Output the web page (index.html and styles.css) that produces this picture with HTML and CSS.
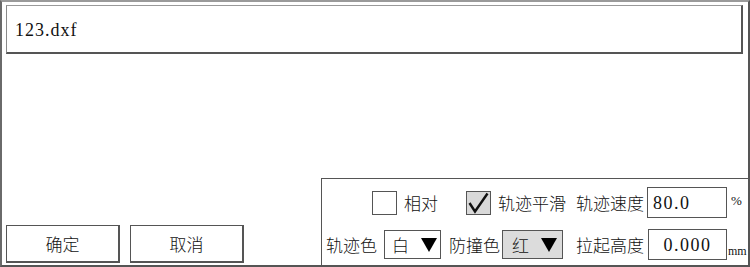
FILE: index.html
```html
<!DOCTYPE html>
<html lang="zh-CN">
<head>
<meta charset="utf-8">
<title>文件</title>
<link rel="stylesheet" href="styles.css">
</head>
<body>
<div class="window">
  <div class="filebox"><span class="filename">123.dxf</span></div>
  <div class="spacer"></div>
  <div class="bottom">
    <div class="buttons">
      <div class="btn">确定</div>
      <div class="btn">取消</div>
    </div>
    <div class="panel">
      <div class="row row1">
        <div class="check check-first"></div>
        <span class="lbl lbl-after-check">相对</span>
        <div class="check check-on check-second">
          <svg class="tick" width="23" height="22" viewBox="0 0 23 22"><polyline points="2.5,11 8,19.5 20.5,1.5" fill="none" stroke="#111" stroke-width="2.4"/></svg>
        </div>
        <span class="lbl lbl-after-check">轨迹平滑</span>
        <span class="lbl lbl-speed">轨迹速度</span>
        <div class="field field-speed">80.0</div>
        <span class="unit unit-pct">%</span>
      </div>
      <div class="row row2">
        <span class="lbl lbl-track">轨迹色</span>
        <div class="select select-white">
          <span class="sel-text">白</span>
          <svg class="arrow" width="16" height="14" viewBox="0 0 16 14"><polygon points="0,0 16,0 8,14" fill="#000"/></svg>
        </div>
        <span class="lbl lbl-avoid">防撞色</span>
        <div class="select select-red">
          <span class="sel-text">红</span>
          <svg class="arrow" width="16" height="14" viewBox="0 0 16 14"><polygon points="0,0 16,0 8,14" fill="#000"/></svg>
        </div>
        <span class="lbl lbl-lift">拉起高度</span>
        <div class="field field-lift">0.000</div>
        <span class="unit unit-mm">mm</span>
      </div>
    </div>
  </div>
</div>
</body>
</html>
```
FILE: styles.css
```css
* { box-sizing: border-box; }
html, body { margin: 0; padding: 0; background: #fff; }
body {
  width: 750px;
  height: 267px;
  font-family: "Noto Sans CJK SC", "Noto Sans", sans-serif;
  font-weight: 300;
  color: #111;
}
.window {
  width: 750px;
  height: 267px;
  border-top: 2px solid #9a9a9a;
  border-left: 2px solid #6a6a6a;
  border-right: 2px solid #555;
  border-bottom: 2px solid #555;
  display: flex;
  flex-direction: column;
  background: #fff;
}
.filebox {
  margin: 3px 5px 0 4px;
  height: 49px;
  border-top: 1px solid #9a9a9a;
  border-left: 1px solid #8a8a8a;
  border-right: 2px solid #555;
  border-bottom: 2px solid #555;
  padding-left: 8px;
  display: flex;
  align-items: center;
}
.filename {
  font-family: "Liberation Serif", "DejaVu Serif", serif;
  font-weight: 400;
  font-size: 18px;
  letter-spacing: 1px;
  color: #111;
  margin-top: 3px;
}
.spacer { flex: 1; }
.bottom {
  display: flex;
  align-items: flex-end;
}
.buttons {
  display: flex;
  gap: 10px;
  margin-left: 4px;
  margin-bottom: 2px;
}
.btn {
  width: 114px;
  height: 38px;
  border: 1px solid #555;
  border-right-width: 2px;
  border-bottom-width: 2px;
  display: flex;
  align-items: center;
  justify-content: center;
  font-size: 17px;
  color: #111;
}
.panel {
  margin-left: auto;
  width: 427px;
  height: 87px;
  border-top: 1px solid #555;
  border-left: 1px solid #555;
  padding-top: 8px;
}
.row {
  display: flex;
  align-items: center;
  height: 31px;
}
.row2 { margin-top: 11px; }
.lbl {
  font-size: 17px;
  line-height: 20px;
  color: #111;
  white-space: nowrap;
}
.check {
  width: 25px;
  height: 24px;
  border: 1px solid #555;
  background: #fff;
}
.check-first { margin-left: 50px; }
.check-second { margin-left: 28px; }
.check-on { background: #d9d9d9; }
.tick { display: block; }
.lbl-after-check { margin-left: 7px; }
.lbl-speed { margin-left: 10px; }
.field {
  height: 31px;
  border: 1px solid #555;
  font-family: "Liberation Serif", "DejaVu Serif", serif;
  font-weight: 400;
  font-size: 18px;
  letter-spacing: 1.5px;
  display: flex;
  align-items: center;
  color: #111;
  padding-top: 2px;
}
.field-speed {
  width: 80px;
  margin-left: 3px;
  padding-left: 5px;
}
.field-lift {
  width: 79px;
  margin-left: 4px;
  justify-content: center;
}
.unit {
  font-family: "Liberation Serif", "DejaVu Serif", serif;
  font-weight: 400;
  color: #111;
}
.unit-pct {
  font-size: 13px;
  margin-left: 4px;
  align-self: flex-start;
  margin-top: 6px;
}
.unit-mm {
  font-size: 12px;
  margin-left: 1px;
  align-self: flex-end;
  margin-bottom: 1px;
}
.lbl-track { margin-left: 4px; }
.select {
  height: 29px;
  border: 1px solid #555;
  display: flex;
  align-items: center;
}
.select-white {
  width: 57px;
  margin-left: 7px;
  padding-left: 7px;
}
.select-red {
  width: 61px;
  margin-left: 2px;
  padding-left: 9px;
  background: #dcdcdc;
}
.sel-text { font-size: 17px; color: #111; }
.arrow { display: block; margin-left: auto; }
.select-white .arrow { margin-right: 3px; }
.select-red .arrow { margin-right: 5px; }
.lbl-avoid { margin-left: 8px; }
.lbl-lift { margin-left: 13px; }
```
